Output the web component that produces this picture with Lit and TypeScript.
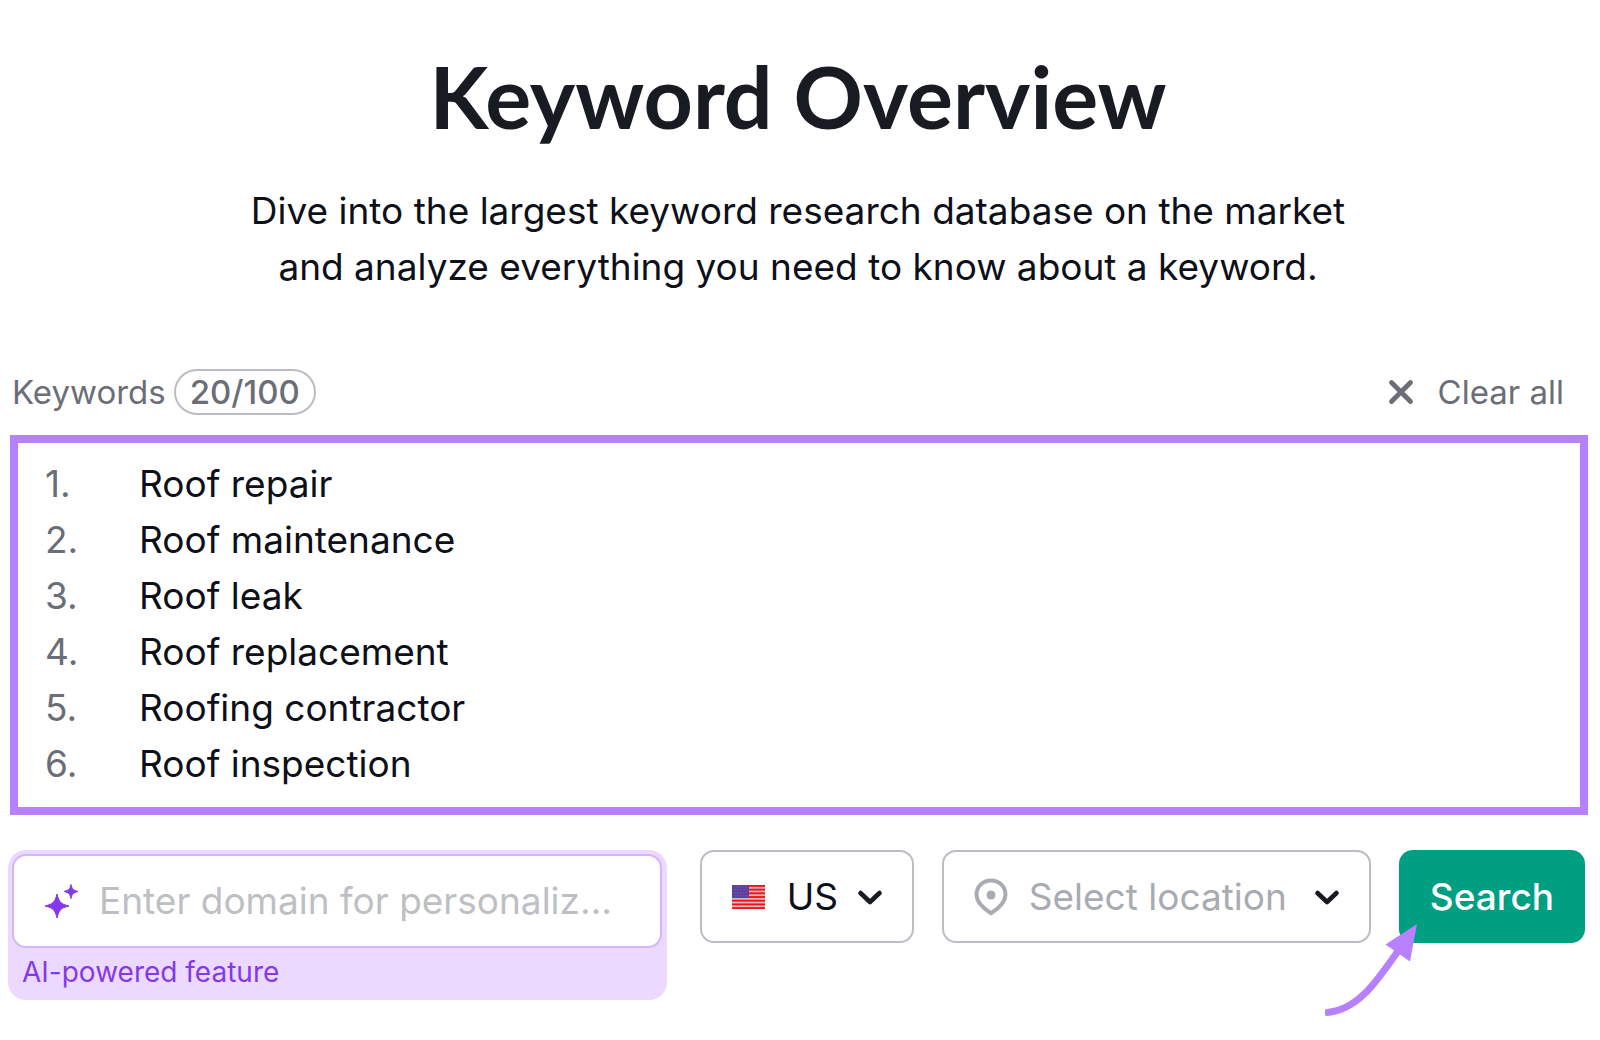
import { LitElement, html, css, svg } from "lit";
import { customElement, state } from "lit/decorators.js";

const STAR_ROWS = [0, 1, 2, 3];
const STRIPES = [0, 2, 4, 6, 8, 10, 12];

@customElement("app-root")
export class AppRoot extends LitElement {
  @state() private keywords: string[] = [
    "Roof repair",
    "Roof maintenance",
    "Roof leak",
    "Roof replacement",
    "Roofing contractor",
    "Roof inspection",
  ];

  static styles = css`
    :host {
      display: block;
      font-family: Inter, "Liberation Sans", sans-serif;
      color: #0d0f19;
      background: #fff;
    }
    * {
      box-sizing: border-box;
    }
    button,
    input,
    select,
    textarea {
      font: inherit;
      color: inherit;
      margin: 0;
      padding: 0;
      border: 0;
      background: none;
      outline: none;
    }
    svg {
      display: block;
      flex: none;
    }
    .page {
      padding: 44px 12px 40px 8px;
    }
    .title {
      margin: 0;
      font-family: Lato, Inter, sans-serif;
      font-size: 86px;
      line-height: 104px;
      font-weight: 700;
      text-align: center;
      color: #191b23;
    }
    .lead {
      margin: 35px 0 0;
      font-size: 37px;
      line-height: 56px;
      text-align: center;
    }
    .bar {
      display: flex;
      align-items: center;
      gap: 8px;
      margin: 74px 0 20px;
      padding: 0 24px 0 4px;
      font-size: 33px;
      line-height: 42px;
      color: #6b6e76;
    }
    .count {
      padding: 0 14px;
      border: 2px solid #bcbdc4;
      border-radius: 24px;
      font-weight: 500;
    }
    .clear {
      display: flex;
      align-items: center;
      gap: 24px;
      margin-left: auto;
      cursor: pointer;
    }
    .editor {
      display: grid;
      grid-template-columns: 94px 1fr;
      height: 380px;
      margin-left: 2px;
      padding: 13px 28px 0 27px;
      border: 8px solid #b780ff;
      overflow: hidden;
      font-size: 37px;
      line-height: 56px;
    }
    .numbers {
      margin: 0;
      padding: 0;
      list-style: none;
      color: #6b6e76;
    }
    .text {
      width: 100%;
      height: 100%;
      resize: none;
      overflow: hidden;
      white-space: pre;
    }
    .form {
      display: flex;
      align-items: flex-start;
      gap: 28px;
      margin: 35px 3px 0 0;
      font-size: 37px;
      line-height: 56px;
    }
    .ai {
      flex: 1;
      min-width: 0;
      margin-right: 5px;
      padding: 4px 5px 8px 4px;
      border-radius: 18px;
      background: #ecd9ff;
    }
    .domain {
      display: flex;
      align-items: center;
      gap: 20px;
      height: 94px;
      padding: 0 31px;
      border: 2px solid #d6b2ff;
      border-radius: 14px;
      background: #fff;
    }
    .domain input {
      flex: 1;
      min-width: 0;
    }
    .domain input::placeholder {
      color: #bdbfc4;
      opacity: 1;
    }
    .note {
      margin: 0;
      padding: 4px 10px 0;
      font-size: 28px;
      line-height: 40px;
      color: #8339e8;
    }
    .select {
      display: grid;
      align-items: center;
      height: 93px;
      border: 2px solid #bcbdc4;
      border-radius: 14px;
    }
    .select > * {
      grid-area: 1 / 1;
    }
    .select select {
      height: 100%;
      padding: 0 73px 0 85px;
      appearance: none;
      cursor: pointer;
    }
    .muted select {
      padding-right: 81px;
      color: #a9abb2;
    }
    .select svg {
      pointer-events: none;
    }
    .lead-icon {
      margin-left: 30px;
    }
    .chevron {
      justify-self: end;
      margin-right: 29px;
    }
    .submit {
      position: relative;
    }
    .search {
      height: 93px;
      padding: 0 31px;
      border-radius: 14px;
      background: #009f81;
      color: #fff;
      font-weight: 500;
      cursor: pointer;
    }
    .arrow {
      position: absolute;
      left: -76px;
      top: 73px;
      pointer-events: none;
    }
  `;

  private onInput(e: Event) {
    this.keywords = (e.target as HTMLTextAreaElement).value.split("\n");
  }

  private clear() {
    this.keywords = [];
  }

  private chevron() {
    return html`<svg class="chevron" width="26" height="18" viewBox="0 0 26 18" aria-hidden="true">
      <path d="M3.5 5 L13 14 L22.5 5" fill="none" stroke="#191b23" stroke-width="4.6" stroke-linecap="round" stroke-linejoin="round" />
    </svg>`;
  }

  private flag() {
    return html`<svg class="lead-icon" width="33" height="24" viewBox="0 0 33 26" preserveAspectRatio="none" aria-hidden="true">
      <rect width="33" height="26" fill="#cdb9bd" />
      ${STRIPES.map((i) => svg`<rect y=${i * 2} width="33" height="2" fill="#fb0d12" />`)}
      <rect width="17" height="14" fill="#5b3fa0" />
      ${STAR_ROWS.map((r) =>
        [0, 1, 2, 3, 4].map(
          (c) => svg`<circle cx=${2 + c * 3 + (r % 2)} cy=${2 + r * 3.2} r="0.6" fill="#8a7aa8" />`,
        ),
      )}
    </svg>`;
  }

  render() {
    return html`
      <main class="page">
        <h1 class="title">Keyword Overview</h1>
        <p class="lead">
          Dive into the largest keyword research database on the market<br />
          and analyze everything you need to know about a keyword.
        </p>

        <div class="bar">
          <label for="keywords">Keywords</label>
          <span class="count">20/100</span>
          <button class="clear" type="button" @click=${this.clear}>
            <svg width="26" height="26" viewBox="0 0 26 26" aria-hidden="true">
              <path d="M3.5 3.5 L22.5 22.5 M22.5 3.5 L3.5 22.5" stroke="#6b6e76" stroke-width="4.8" stroke-linecap="round" />
            </svg>
            Clear all
          </button>
        </div>

        <div class="editor">
          <ol class="numbers" aria-hidden="true">
            ${this.keywords.map((_, i) => html`<li>${i + 1}.</li>`)}
          </ol>
          <textarea
            id="keywords"
            class="text"
            spellcheck="false"
            .value=${this.keywords.join("\n")}
            @input=${this.onInput}
          ></textarea>
        </div>

        <form class="form" @submit=${(e: Event) => e.preventDefault()}>
          <div class="ai">
            <div class="domain">
              <svg width="34" height="34" viewBox="0 0 34 34" aria-hidden="true">
                <path d="M12 10 C14 18.2 15.8 20 24 22 C15.8 24 14 25.8 12 34 C10 25.8 8.2 24 0 22 C8.2 20 10 18.2 12 10Z" fill="#8339e8" stroke="#8339e8" stroke-width="1" stroke-linejoin="round" />
                <path d="M26 0.5 C27.2 5.3 28.2 6.3 33 7.5 C28.2 8.7 27.2 9.7 26 14.5 C24.8 9.7 23.8 8.7 19 7.5 C23.8 6.3 24.8 5.3 26 0.5Z" fill="#8339e8" stroke="#8339e8" stroke-width="1" stroke-linejoin="round" />
              </svg>
              <input type="text" aria-label="Domain" aria-describedby="note" placeholder="Enter domain for personaliz..." />
            </div>
            <p class="note" id="note">AI-powered feature</p>
          </div>

          <div class="select">
            <select aria-label="Country">
              <option>US</option>
            </select>
            ${this.flag()} ${this.chevron()}
          </div>

          <div class="select muted">
            <select aria-label="Location">
              <option>Select location</option>
            </select>
            <svg class="lead-icon" width="34" height="38" viewBox="0 0 34 38" aria-hidden="true">
              <path d="M17 2.5 C8.5 2.5 2.5 8.8 2.5 16.5 C2.5 24 8 29.5 17 35.3 C26 29.5 31.5 24 31.5 16.5 C31.5 8.8 25.5 2.5 17 2.5Z" fill="none" stroke="#a9abb2" stroke-width="4" stroke-linejoin="round" />
              <circle cx="17" cy="17" r="4.5" fill="#a9abb2" />
            </svg>
            ${this.chevron()}
          </div>

          <div class="submit">
            <button class="search" type="submit">Search</button>
            <svg class="arrow" width="96" height="96" viewBox="0 0 96 96" aria-hidden="true">
              <path d="M4 89.5 C34 87 52 61 75 28" fill="none" stroke="#b780ff" stroke-width="7" />
              <path d="M3.5 87.5 L3.5 91.5" stroke="#b780ff" stroke-width="3" stroke-linecap="round" />
              <path d="M94 1 L62.5 21.5 L87 38.5Z" fill="#b780ff" />
            </svg>
          </div>
        </form>
      </main>
    `;
  }
}
